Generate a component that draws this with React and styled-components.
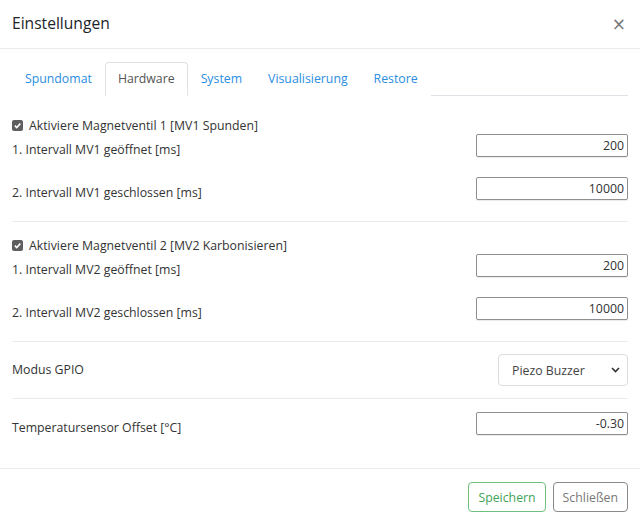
import React from 'react';
import styled, { createGlobalStyle } from 'styled-components';

const GlobalStyle = createGlobalStyle`
    html, body {
        margin: 0;
        padding: 0;
        background: #fff;
    }
    body {
        font-family: "Open Sans", "Noto Sans", sans-serif;
        color: #333;
    }
    * {
        box-sizing: border-box;
    }
`;

const Modal = styled.div`
    width: 640px;
    height: 524px;
    display: flex;
    flex-direction: column;
    background: #fff;
`;

const Header = styled.div`
    height: 49px;
    padding: 0 12px;
    display: flex;
    align-items: center;
    justify-content: space-between;
    border-bottom: 1px solid #e9ecef;
`;

const Title = styled.h5`
    margin: 0;
    font-size: 15.6px;
    font-weight: 400;
    color: #212529;
    padding-bottom: 2px;
`;

const Close = styled.button`
    border: 0;
    background: transparent;
    padding: 0;
    margin-right: 2px;
    font-size: 17px;
    line-height: 1;
    font-weight: 400;
    color: #777;
    cursor: pointer;
    font-family: "DejaVu Sans", sans-serif;
`;

const Body = styled.div`
    flex: 1;
    padding: 13px 12px 0;
`;

const Tabs = styled.div`
    display: flex;
    height: 34px;
    border-bottom: 1px solid #dee2e6;
`;

const Tab = styled.a`
    display: flex;
    align-items: center;
    padding: 0 12px 1px;
    font-size: 12.3px;
    color: ${p => (p.$active ? '#555' : '#2b8ee0')};
    background: #fff;
    border: 1px solid ${p => (p.$active ? '#dee2e6' : 'transparent')};
    border-bottom-color: ${p => (p.$active ? '#fff' : 'transparent')};
    border-radius: 4px 4px 0 0;
    margin-bottom: -1px;
    cursor: pointer;
`;

const Content = styled.div`
    padding-top: 4px;
`;

const Section = styled.div`
    padding: ${p => p.$pad || '14px 0 18px'};
    border-bottom: ${p => (p.$last ? 'none' : '1px solid #e9ecef')};
`;

const CheckRow = styled.label`
    display: flex;
    align-items: center;
    gap: 6px;
    height: 18px;
    font-size: 12.3px;
    color: #333;
`;

const CheckBox = styled.span`
    width: 11px;
    height: 11px;
    border-radius: 2px;
    background: #5f5f5f;
    display: flex;
    align-items: center;
    justify-content: center;
`;

const Row = styled.div`
    display: flex;
    justify-content: space-between;
    align-items: ${p => (p.$center ? 'center' : 'flex-start')};
    & + & {
        margin-top: 17px;
    }
`;

const Label = styled.span`
    font-size: 12.3px;
    line-height: 20px;
    padding-top: ${p => (p.$flat ? '0' : '6px')};
    color: #333;
`;

const NumberInput = styled.input`
    width: 152px;
    height: 23px;
    border: 1px solid #8f8f8f;
    border-radius: 2px;
    padding: 0 3px;
    text-align: right;
    font-family: inherit;
    font-size: 12.3px;
    color: #333;
    background: #fff;
    box-shadow: 0 1px 0 rgba(0, 0, 0, 0.08);
    outline: none;
`;

const SelectWrap = styled.div`
    position: relative;
    width: 130px;
    height: 32px;
`;

const Select = styled.select`
    appearance: none;
    width: 100%;
    height: 100%;
    border: 1px solid #dcdcdc;
    border-radius: 4px;
    background: #fff;
    padding: 0 24px 0 13px;
    font-family: inherit;
    font-size: 12.3px;
    color: #444;
    outline: none;
`;

const Chevron = styled.svg`
    position: absolute;
    right: 8px;
    top: 13px;
    pointer-events: none;
`;

const Footer = styled.div`
    height: 56px;
    border-top: 1px solid #e9ecef;
    display: flex;
    justify-content: flex-end;
    align-items: flex-start;
    gap: 7px;
    padding: 13px 12px 0;
`;

const Button = styled.button`
    height: 30px;
    padding: 0 9px;
    border-radius: 4px;
    background: #fff;
    font-family: inherit;
    font-size: 12.3px;
    border: 1px solid ${p => (p.$variant === 'success' ? '#6cc17c' : '#8a8a8a')};
    color: ${p => (p.$variant === 'success' ? '#3fa457' : '#777')};
    cursor: pointer;
`;

const tabs = ['Spundomat', 'Hardware', 'System', 'Visualisierung', 'Restore'];

function Checked({ children }) {
    return (
        <CheckRow>
            <CheckBox>
                <svg width="9" height="9" viewBox="0 0 10 10">
                    <path d="M2 5.2 L4.2 7.3 L8.2 2.8" fill="none" stroke="#fff" strokeWidth="1.8" />
                </svg>
            </CheckBox>
            {children}
        </CheckRow>
    );
}

function Field({ label, value }) {
    return (
        <Row>
            <Label>{label}</Label>
            <NumberInput defaultValue={value} />
        </Row>
    );
}

export default function App() {
    return (
        <Modal>
            <GlobalStyle />
            <Header>
                <Title>Einstellungen</Title>
                <Close>×</Close>
            </Header>
            <Body>
                <Tabs>
                    {tabs.map(t => (
                        <Tab key={t} $active={t === 'Hardware'}>{t}</Tab>
                    ))}
                </Tabs>
                <Content>
                    <Section $pad="16px 0 18px">
                        <Checked>Aktiviere Magnetventil 1 [MV1 Spunden]</Checked>
                        <Field label="1. Intervall MV1 geöffnet [ms]" value="200" />
                        <Field label="2. Intervall MV1 geschlossen [ms]" value="10000" />
                    </Section>
                    <Section>
                        <Checked>Aktiviere Magnetventil 2 [MV2 Karbonisieren]</Checked>
                        <Field label="1. Intervall MV2 geöffnet [ms]" value="200" />
                        <Field label="2. Intervall MV2 geschlossen [ms]" value="10000" />
                    </Section>
                    <Section $pad="12px 0 12px">
                        <Row $center>
                            <Label $flat>Modus GPIO</Label>
                            <SelectWrap>
                                <Select defaultValue="piezo">
                                    <option value="piezo">Piezo Buzzer</option>
                                </Select>
                                <Chevron width="9" height="6" viewBox="0 0 9 6">
                                    <path d="M1 1 L4.5 4.5 L8 1" fill="none" stroke="#333" strokeWidth="1.6" />
                                </Chevron>
                            </SelectWrap>
                        </Row>
                    </Section>
                    <Section $pad="13px 0 0" $last>
                        <Field label="Temperatursensor Offset [°C]" value="-0.30" />
                    </Section>
                </Content>
            </Body>
            <Footer>
                <Button $variant="success">Speichern</Button>
                <Button>Schließen</Button>
            </Footer>
        </Modal>
    );
}
